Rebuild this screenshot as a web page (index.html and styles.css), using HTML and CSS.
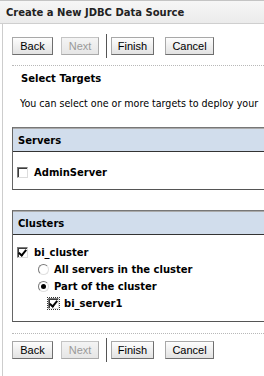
FILE: index.html
```html
<!DOCTYPE html>
<html lang="en">
<head>
    <meta charset="UTF-8">
    <meta name="viewport" content="width=device-width, initial-scale=1.0">
    <title>Create a New JDBC Data Source</title>
    <link rel="stylesheet" href="styles.css">
</head>
<body>
    <div class="titlebar">
        <h1>Create a New JDBC Data Source</h1>
    </div>

    <div class="page">
        <div class="buttonbar">
            <button class="btn-back">Back</button>
            <button class="btn-next" disabled>Next</button>
            <span class="sep"></span>
            <button class="btn-finish">Finish</button>
            <button class="btn-cancel">Cancel</button>
        </div>

        <div class="content">
            <h2>Select Targets</h2>
            <p class="intro">You can select one or more targets to deploy your</p>

            <div class="target-table">
                <div class="table-head">Servers</div>
                <div class="table-body servers">
                    <label class="row">
                        <span class="checkbox"></span>
                        <span class="label">AdminServer</span>
                    </label>
                </div>
            </div>

            <div class="target-table">
                <div class="table-head">Clusters</div>
                <div class="table-body clusters">
                    <label class="row">
                        <span class="checkbox checked"></span>
                        <span class="label">bi_cluster</span>
                    </label>
                    <label class="row indent-1">
                        <span class="radio"></span>
                        <span class="label">All servers in the cluster</span>
                    </label>
                    <label class="row indent-1">
                        <span class="radio selected"></span>
                        <span class="label">Part of the cluster</span>
                    </label>
                    <label class="row indent-2">
                        <span class="checkbox checked focused"></span>
                        <span class="label">bi_server1</span>
                    </label>
                </div>
            </div>
        </div>

        <div class="buttonbar bottom">
            <button class="btn-back">Back</button>
            <button class="btn-next" disabled>Next</button>
            <span class="sep"></span>
            <button class="btn-finish">Finish</button>
            <button class="btn-cancel">Cancel</button>
        </div>
    </div>
</body>
</html>
```

FILE: styles.css
```css
* {
    margin: 0;
    padding: 0;
    box-sizing: border-box;
}

html, body {
    overflow: hidden;
}

body {
    font-family: "DejaVu Sans", Tahoma, sans-serif;
    font-size: 11px;
    color: #000;
    background-color: #fff;
    width: 264px;
    height: 376px;
}

.titlebar {
    height: 24px;
    border-top: 1px solid #c4c4c4;
    border-bottom: 1px solid #cfcfcf;
    background: linear-gradient(#f6f6f6, #ebebeb);
    padding-left: 6px;
    display: flex;
    align-items: center;
}

h1 {
    font-size: 10px;
    font-weight: bold;
    color: #222;
}

.page {
    margin-left: 2px;
    border-left: 1px solid #cdcdcd;
    min-height: 352px;
}

.buttonbar {
    display: flex;
    align-items: center;
    margin-left: 9px;
    padding: 10px 0 7px;
    border-bottom: 1px dotted #b8b8b8;
    width: 400px;
}

.buttonbar.bottom {
    border-bottom: none;
    border-top: 1px dotted #b8b8b8;
    padding: 4px 0 0;
}

button {
    font-family: "Liberation Sans", Arial, sans-serif;
    font-size: 11px;
    height: 18px;
    border: 1px solid #8c8c8c;
    border-color: #a8a8a8 #6e6e6e #6e6e6e #a8a8a8;
    background: linear-gradient(#fdfdfd, #e2e2e2);
    color: #000;
    margin-right: 8px;
    padding: 0;
}

button:disabled {
    color: #9a9a9a;
    border-color: #c4c4c4 #aaaaaa #aaaaaa #c4c4c4;
    background: linear-gradient(#f4f4f4, #e6e6e6);
}

.btn-back { width: 41px; }
.btn-next { width: 38px; }
.btn-finish { width: 43px; margin-right: 11px; }
.btn-cancel { width: 49px; }

.sep {
    width: 1px;
    height: 24px;
    background-color: #555;
    margin: 0 4px 0 -1px;
}

.content {
    padding: 0 0 11px 9px;
}

h2 {
    font-size: 10px;
    font-weight: bold;
    margin: 7px 0 0 9px;
    line-height: 12px;
}

.intro {
    font-size: 10.6px;
    font-family: "DejaVu Sans Condensed", "DejaVu Sans", sans-serif;
    white-space: nowrap;
    margin: 12px 0 0 8px;
    line-height: 13px;
}

.target-table {
    width: 320px;
    border-top: 1px solid #777;
    border-left: 1px solid #666;
    border-bottom: 1px solid #555;
    margin-top: 17px;
}

.target-table + .target-table {
    margin-top: 20px;
}

.table-head {
    background-color: #d1ddec;
    border-top: 1px solid #aaa;
    border-bottom: 1px solid #333;
    height: 24px;
    padding-left: 5px;
    display: flex;
    align-items: center;
    font-size: 10px;
    font-weight: bold;
}

.table-body {
    padding-left: 4px;
}

.table-body.servers {
    padding-top: 12px;
    padding-bottom: 8px;
}

.table-body.clusters {
    padding-top: 8px;
    padding-bottom: 9px;
}

.row {
    display: flex;
    align-items: center;
    height: 17px;
    font-size: 10px;
    font-weight: bold;
}

.clusters .row:first-child {
    height: 18px;
}

.indent-1 { padding-left: 21px; }
.indent-2 { padding-left: 31px; }

.checkbox {
    position: relative;
    width: 11px;
    height: 11px;
    border: 1px solid;
    border-color: #7a7a7a #dcdcdc #dcdcdc #7a7a7a;
    box-shadow: inset 1px 1px 0 #3c3c3c;
    background-color: #fff;
    margin-right: 6px;
}

.checkbox.checked::after {
    content: "";
    position: absolute;
    left: 2px;
    top: 0px;
    width: 3px;
    height: 6px;
    border: solid #000;
    border-width: 0 2px 2px 0;
    transform: rotate(40deg);
}

.checkbox.focused {
    outline: 1px dotted #333;
    outline-offset: 0;
    margin-right: 5px;
}

.radio {
    position: relative;
    width: 11px;
    height: 11px;
    border-radius: 50%;
    border: 1px solid;
    border-color: #7a7a7a #e0e0e0 #e0e0e0 #7a7a7a;
    background-color: #fff;
    margin-right: 5px;
}

.radio.selected::after {
    content: "";
    position: absolute;
    left: 2px;
    top: 2px;
    width: 5px;
    height: 5px;
    border-radius: 50%;
    background-color: #000;
}
```
